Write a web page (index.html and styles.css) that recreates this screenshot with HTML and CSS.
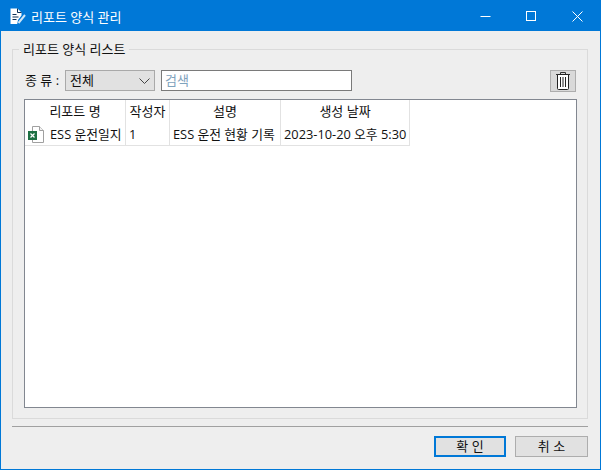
FILE: index.html
```html
<!DOCTYPE html>
<html lang="ko">
<head>
<meta charset="utf-8">
<title>리포트 양식 관리</title>
<link rel="stylesheet" href="styles.css">
</head>
<body>
<div class="window">
  <header class="titlebar">
    <svg class="app-icon" width="18" height="20" viewBox="0 0 18 20">
      <path d="M1.500 2.500h7l4 4v3l-3.500 4.500-.8 4h-6.700z" fill="#fff"/>
      <path d="M8.500 2.500v4h4" fill="none" stroke="#0b2f55" stroke-width="1"/>
      <path d="M9.500 17l6.500-8" stroke="#cfe6f7" stroke-width="2" fill="none"/>
      <path d="M3.500 8.500h4M3.500 11h6M3.500 13.500h4" stroke="#0b2f55" stroke-width="1"/>
    </svg>
    <span class="title">리포트 양식 관리</span>
    <div class="win-controls">
      <span class="win-btn"><svg width="11" height="11" viewBox="0 0 11 11"><path d="M0.500 5.500h10" stroke="#fff" fill="none"/></svg></span>
      <span class="win-btn"><svg width="11" height="11" viewBox="0 0 11 11"><rect x="0.500" y="0.500" width="9" height="9" stroke="#fff" fill="none"/></svg></span>
      <span class="win-btn"><svg width="11" height="11" viewBox="0 0 11 11"><path d="M0.500 0.500l10 10M10.500 0.500l-10 10" stroke="#fff" fill="none"/></svg></span>
    </div>
  </header>
  <main class="content">
    <fieldset class="group">
      <legend class="legend">리포트 양식 리스트</legend>
      <div class="toolbar">
        <label class="kind-label">종 류 :</label>
        <div class="select"><span class="select-value">전체</span>
          <svg width="11" height="6" viewBox="0 0 11 6"><path d="M0.500 0.500l5 5 5-5" stroke="#444" fill="none"/></svg>
        </div>
        <div class="search">검색</div>
        <button class="trash" type="button" aria-label="삭제">
          <svg width="14" height="18" viewBox="0 0 14 18">
            <path d="M0 2.500h14M4.500 2.500v-2h5v2" stroke="#333" fill="none"/>
            <path d="M1.500 2.500h11v14a1 1 0 0 1-1 1h-9a1 1 0 0 1-1-1z" fill="#fff" stroke="#222"/>
            <path d="M4.500 5v10M7 5v10M9.500 5v10" stroke="#222" fill="none"/>
          </svg>
        </button>
      </div>
      <div class="list">
        <div class="row head">
          <div class="cell c1">리포트 명</div>
          <div class="cell c2">작성자</div>
          <div class="cell c3">설명</div>
          <div class="cell c4">생성 날짜</div>
        </div>
        <div class="row body">
          <div class="cell c1">
            <svg class="xls" width="17" height="17" viewBox="0 0 17 17">
              <path d="M4.500 0.500h7l4 4v12h-11z" fill="#fff" stroke="#a0a0a0"/>
              <path d="M11.500 0.500v4h4" fill="#f2f2f2" stroke="#a0a0a0"/>
              <rect x="0" y="5" width="9" height="9" fill="#1d7044"/>
              <path d="M2.500 7.500l4 4M6.500 7.500l-4 4" stroke="#fff" stroke-width="1.200" fill="none"/>
            </svg>
            <span>ESS 운전일지</span>
          </div>
          <div class="cell c2">1</div>
          <div class="cell c3">ESS 운전 현황 기록</div>
          <div class="cell c4">2023-10-20 오후 5:30</div>
        </div>
      </div>
    </fieldset>
    <hr class="divider">
    <footer class="actions">
      <button class="btn primary" type="button">확 인</button>
      <button class="btn" type="button">취 소</button>
    </footer>
  </main>
</div>
</body>
</html>
```
FILE: styles.css
```css
* { box-sizing: border-box; }
html, body { margin: 0; padding: 0; }
body {
  width: 601px;
  height: 470px;
  overflow: hidden;
  font-family: "Open Sans", "Noto Sans CJK KR", sans-serif;
  font-size: 13px;
  color: #111;
}
.window {
  width: 601px;
  height: 470px;
  border: 1px solid #0078d7;
  display: flex;
  flex-direction: column;
  background: #eeeeee;
}
.titlebar {
  height: 30px;
  flex: none;
  background: #0078d7;
  color: #fff;
  display: flex;
  align-items: center;
  padding-left: 8px;
}
.app-icon { flex: none; }
.title { margin-left: 4px; font-size: 13px; }
.win-controls { margin-left: auto; display: flex; }
.win-btn {
  width: 46px;
  height: 30px;
  display: flex;
  align-items: center;
  justify-content: center;
}
.content {
  flex: 1;
  padding: 10px 12px 0 11px;
  display: flex;
  flex-direction: column;
}
.group {
  margin: 0;
  padding: 0 10px 0 11px;
  height: 378px;
  flex: none;
  border: 1px solid #dadada;
  min-width: 0;
}
.legend {
  margin-left: -5px;
  padding: 0 4px;
  line-height: 17px;
  font-size: 13px;
}
.toolbar {
  display: flex;
  align-items: flex-start;
  height: 29px;
  margin-top: 12px;
}
.kind-label { width: 41px; padding-left: 1px; line-height: 21px; flex: none; }
.select {
  width: 90px;
  height: 21px;
  flex: none;
  border: 1px solid #a9a9a9;
  background: #e1e1e1;
  display: flex;
  align-items: center;
  justify-content: space-between;
  padding: 0 4px 0 4px;
}
.select-value { line-height: 19px; }
.search {
  width: 191px;
  height: 21px;
  flex: none;
  margin-left: 6px;
  border: 1px solid #7a7a7a;
  background: #fff;
  color: #7fa3bd;
  padding-left: 3px;
  line-height: 19px;
}
.trash {
  width: 26px;
  height: 22px;
  flex: none;
  margin-left: auto;
  margin-right: 1px;
  padding: 0;
  border: 1px solid #adadad;
  background: #d9d9d9;
  display: flex;
  align-items: center;
  justify-content: center;
}
.list {
  height: 309px;
  border: 1px solid #828790;
  background: #fff;
}
.row { display: flex; width: 385px; }
.head { height: 23px; }
.body { height: 23px; border-bottom: 1px solid #e2e2e2; font-size: 12.800px; }
.cell {
  border-right: 1px solid #e2e2e2;
  white-space: nowrap;
  overflow: hidden;
  flex: none;
  line-height: 22px;
  padding-left: 3px;
}
.head .cell { text-align: center; padding-left: 0; }
.c1 { width: 101px; }
.c2 { width: 44px; }
.c3 { width: 111px; }
.c4 { width: 129px; }
.body .c1 { display: flex; align-items: center; }
.xls { flex: none; margin-right: 5px; margin-top: 1px; }
.divider {
  margin: 7px 0 0 0;
  height: 0;
  border: 0;
  border-top: 1px solid #a0a0a0;
  width: 576px;
  flex: none;
}
.actions {
  display: flex;
  justify-content: flex-end;
  gap: 9px;
  margin-top: 9px;
}
.btn {
  height: 21px;
  width: 73px;
  padding: 0;
  font: inherit;
  line-height: 17px;
  color: #111;
  background: #e1e1e1;
  border: 1px solid #adadad;
}
.primary { width: 72px; border: 2px solid #0078d7; }
```
